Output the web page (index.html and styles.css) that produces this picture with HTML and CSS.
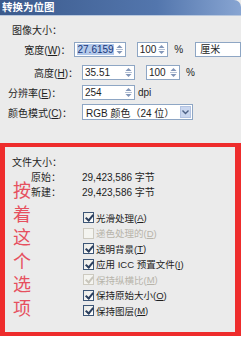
FILE: index.html
```html
<!DOCTYPE html>
<html>
<head>
    <meta charset="UTF-8">
    <meta name="viewport" content="width=device-width, initial-scale=1.0">
    <title>转换为位图</title>
    <link rel="stylesheet" href="styles.css">
</head>
<body>
    <div class="dialog">
        <div class="titlebar">转换为位图</div>

        <div class="sizeGroup">
            <div class="groupLabel">图像大小：</div>

            <div class="fieldRow rowW">
                <span class="fieldLabel right">宽度(<u>W</u>)：</span>
                <span class="spin wide">
                    <span class="val"><span class="selected">27.6159</span></span>
                    <span class="arrows"><svg width="9" height="11" viewBox="0 0 9 11"><path d="M4.5 1 L7.5 4 L1.5 4 Z" fill="#8296b8"/><path d="M1 5.5 H8" stroke="#b4c0d4" stroke-width="1"/><path d="M4.5 10 L7.5 7 L1.5 7 Z" fill="#8296b8"/></svg></span>
                </span>
                <span class="spin narrow">
                    <span class="val">100</span>
                    <span class="arrows"><svg width="9" height="11" viewBox="0 0 9 11"><path d="M4.5 1 L7.5 4 L1.5 4 Z" fill="#8296b8"/><path d="M1 5.5 H8" stroke="#b4c0d4" stroke-width="1"/><path d="M4.5 10 L7.5 7 L1.5 7 Z" fill="#8296b8"/></svg></span>
                </span>
                <span class="unit">%</span>
                <span class="unitSelect">厘米</span>
            </div>

            <div class="fieldRow rowH">
                <span class="fieldLabel right">高度(<u>H</u>)：</span>
                <span class="spin wide">
                    <span class="val">35.51</span>
                    <span class="arrows"><svg width="9" height="11" viewBox="0 0 9 11"><path d="M4.5 1 L7.5 4 L1.5 4 Z" fill="#8296b8"/><path d="M1 5.5 H8" stroke="#b4c0d4" stroke-width="1"/><path d="M4.5 10 L7.5 7 L1.5 7 Z" fill="#8296b8"/></svg></span>
                </span>
                <span class="spin narrow">
                    <span class="val">100</span>
                    <span class="arrows"><svg width="9" height="11" viewBox="0 0 9 11"><path d="M4.5 1 L7.5 4 L1.5 4 Z" fill="#8296b8"/><path d="M1 5.5 H8" stroke="#b4c0d4" stroke-width="1"/><path d="M4.5 10 L7.5 7 L1.5 7 Z" fill="#8296b8"/></svg></span>
                </span>
                <span class="unit">%</span>
            </div>

            <div class="fieldRow rowE">
                <span class="fieldLabel">分辨率(<u>E</u>)：</span>
                <span class="spin wide">
                    <span class="val">254</span>
                    <span class="arrows"><svg width="9" height="11" viewBox="0 0 9 11"><path d="M4.5 1 L7.5 4 L1.5 4 Z" fill="#8296b8"/><path d="M1 5.5 H8" stroke="#b4c0d4" stroke-width="1"/><path d="M4.5 10 L7.5 7 L1.5 7 Z" fill="#8296b8"/></svg></span>
                </span>
                <span class="unit dpi">dpi</span>
            </div>

            <div class="fieldRow rowC">
                <span class="fieldLabel">颜色模式(<u>C</u>)：</span>
                <span class="modeSelect">
                    <span class="val">RGB 颜色（24 位）</span>
                    <span class="dropBtn"><svg width="7" height="5" viewBox="0 0 7 5"><path d="M0.5 0.5 L3.5 3.5 L6.5 0.5" fill="none" stroke="#4d6185" stroke-width="1.4"/></svg></span>
                </span>
            </div>
        </div>

        <div class="fileBox">
            <div class="note">按着这个选项</div>

            <div class="groupLabel">文件大小：</div>
            <div class="fileRow">
                <span class="fileLabel">原始：</span>
                <span>29,423,586 字节</span>
            </div>
            <div class="fileRow">
                <span class="fileLabel">新建：</span>
                <span>29,423,586 字节</span>
            </div>

            <div class="options">
                <div class="option"><span class="check on"></span>光滑处理(<u>A</u>)</div>
                <div class="option disabled"><span class="check"></span>递色处理的(<u>D</u>)</div>
                <div class="option"><span class="check on"></span>透明背景(<u>T</u>)</div>
                <div class="option"><span class="check on"></span>应用 ICC 预置文件(<u>I</u>)</div>
                <div class="option disabled"><span class="check on"></span>保持纵横比(<u>M</u>)</div>
                <div class="option"><span class="check on"></span>保持原始大小(<u>O</u>)</div>
                <div class="option"><span class="check on"></span>保持图层(<u>M</u>)</div>
            </div>
        </div>
    </div>
</body>
</html>
```

FILE: styles.css
```css
body {
    margin: 0;
    background: #fff;
    font-family: "Liberation Sans", "Noto Sans CJK SC", sans-serif;
    font-size: 10px;
    color: #1e1e1e;
}

.dialog {
    width: 241px;
    height: 336px;
    background: #ebebeb;
    display: flex;
    flex-direction: column;
    overflow: hidden;
}

.titlebar {
    height: 15px;
    line-height: 15px;
    padding-left: 2px;
    color: #fff;
    font-weight: bold;
    font-size: 10.5px;
    background: linear-gradient(to right, #3b5a8c, #5376ad 65%, #88a5d2);
    border-top-right-radius: 7px;
    border-bottom: 1px solid #b9c8de;
}

.sizeGroup {
    padding-top: 8px;
}

.groupLabel {
    padding-left: 12px;
    line-height: 14px;
}

.fieldRow {
    display: flex;
    align-items: center;
    height: 16px;
}

.rowW { margin-top: 3px; }
.rowH { margin-top: 7px; }
.rowE { margin-top: 4px; }
.rowC { margin-top: 4px; }

.fieldLabel {
    width: 74px;
    padding-left: 8px;
}

.fieldLabel.right {
    width: 78px;
    padding-left: 0;
    padding-right: 4px;
    text-align: right;
}

.spin {
    display: flex;
    align-items: center;
    height: 15px;
    box-sizing: border-box;
    border: 1px solid #8ea6c4;
    background: #fff;
}

.spin.wide { width: 53px; }
.spin.narrow { width: 34px; margin-left: 11px; }

.spin .val {
    flex: 1;
    padding-left: 2px;
    line-height: 13px;
    white-space: nowrap;
}

.selected {
    background: #b3c9ea;
    color: #17367a;
}

.spin .arrows {
    width: 11px;
    display: flex;
    justify-content: center;
}

.unit {
    margin-left: 6px;
}

.unit.dpi {
    margin-left: 3px;
}

.unitSelect {
    margin-left: 12px;
    width: 50px;
    height: 15px;
    box-sizing: border-box;
    border: 1px solid #8ea6c4;
    background: #fff;
    padding-left: 4px;
    line-height: 13px;
}

.modeSelect {
    display: flex;
    align-items: center;
    width: 111px;
    height: 16px;
    box-sizing: border-box;
    border: 1px solid #8ea6c4;
    background: #fff;
}

.modeSelect .val {
    flex: 1;
    padding-left: 3px;
    white-space: nowrap;
}

.dropBtn {
    width: 11px;
    height: 12px;
    margin-right: 1px;
    display: flex;
    align-items: center;
    justify-content: center;
    background: #c9d6ef;
    border: 1px solid #b3c3e2;
    box-sizing: border-box;
}

.fileBox {
    position: relative;
    margin-top: 23px;
    height: 193px;
    box-sizing: border-box;
    border: 4px solid #ee2c2c;
    border-left-width: 5px;
    border-right-width: 6px;
    padding-top: 8px;
}

.fileBox .groupLabel {
    padding-left: 7px;
    line-height: 15px;
}

.fileRow {
    display: flex;
    line-height: 15px;
}

.fileLabel {
    width: 51px;
    padding-left: 26px;
}

.note {
    position: absolute;
    left: 8px;
    top: 31px;
    width: 18px;
    font-family: "Noto Sans CJK SC", sans-serif;
    font-size: 18px;
    line-height: 23.5px;
    color: #e6505e;
}

.options {
    margin-top: 10px;
    padding-left: 78px;
    font-size: 9.5px;
}

.option {
    display: flex;
    align-items: center;
    height: 15.5px;
    white-space: nowrap;
}

.option.disabled {
    color: #b7b4aa;
}

.check {
    width: 11px;
    height: 11px;
    box-sizing: border-box;
    border: 1px solid #3d5677;
    background: linear-gradient(135deg, #e9e9e4, #fff);
    margin-right: 2px;
    position: relative;
}

.check.on::after {
    content: "";
    position: absolute;
    left: 3px;
    top: 0px;
    width: 3px;
    height: 6px;
    border: solid #2b3f5e;
    border-width: 0 2px 2px 0;
    transform: rotate(40deg);
}

.option.disabled .check {
    border-color: #cdcac0;
    background: #f4f4f0;
}

.option.disabled .check.on::after {
    border-color: #c8c5bb;
}
```
